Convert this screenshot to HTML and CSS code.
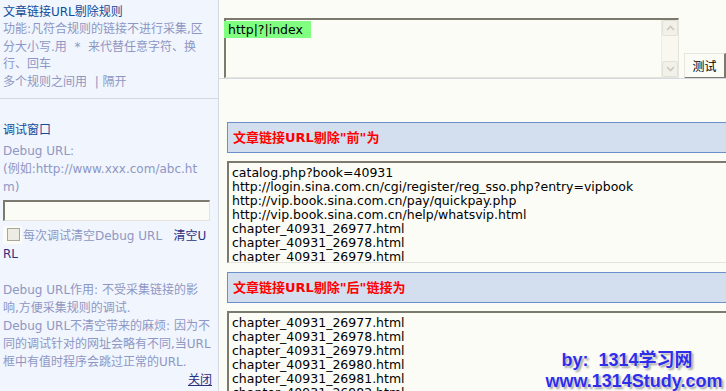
FILE: index.html
```html
<!DOCTYPE html>
<html lang="zh-CN">
<head>
    <meta charset="UTF-8">
    <title>采集规则 - 链接过滤</title>
    <link rel="stylesheet" href="styles.css">
</head>
<body>
    <div class="page">
        <div class="side top">
            <div class="label">文章链接URL剔除规则</div>
            <div class="note">功能:凡符合规则的链接不进行采集,区分大小写.用&nbsp; * &nbsp;来代替任意字符、换行、回车<br>多个规则之间用&nbsp; | 隔开</div>
        </div>
        <div class="main top rules-row">
            <div class="box rules">
                <div class="box-text"><span class="hit">http|?|index</span></div>
                <div class="scroll">
                    <span class="arrow"><svg width="9" height="6" viewBox="0 0 9 6"><path d="M1 5 L4.5 1.5 L8 5" fill="none" stroke="#c9c9bf" stroke-width="1.6"/></svg></span>
                    <span class="arrow"><svg width="9" height="6" viewBox="0 0 9 6"><path d="M1 1 L4.5 4.5 L8 1" fill="none" stroke="#c9c9bf" stroke-width="1.6"/></svg></span>
                </div>
            </div>
            <button class="btn">测试</button>
        </div>

        <div class="side debug">
            <div class="label label-gap">调试窗口</div>
            <div class="note">Debug URL:<br>(例如:http://www.xxx.com/abc.htm)</div>
            <div class="field"></div>
            <div class="note check-line"><span class="check"><span class="check-box"></span></span>每次调试清空Debug URL&nbsp;&nbsp; <a class="clear" href="#">清空URL</a></div>
            <div class="note"><br>Debug URL作用: 不受采集链接的影响,方便采集规则的调试.<br>Debug URL不清空带来的麻烦: 因为不同的调试针对的网址会略有不同,当URL框中有值时程序会跳过正常的URL.</div>
            <div class="note close"><a href="#">关闭</a></div>
        </div>
        <div class="main results">
            <div class="bar">文章链接URL剔除"前"为</div>
            <div class="box list">
                catalog.php?book=40931<br>
                http://login.sina.com.cn/cgi/register/reg_sso.php?entry=vipbook<br>
                http://vip.book.sina.com.cn/pay/quickpay.php<br>
                http://vip.book.sina.com.cn/help/whatsvip.html<br>
                chapter_40931_26977.html<br>
                chapter_40931_26978.html<br>
                chapter_40931_26979.html<br>
                chapter_40931_26980.html
            </div>
            <div class="bar">文章链接URL剔除"后"链接为</div>
            <div class="box list">
                chapter_40931_26977.html<br>
                chapter_40931_26978.html<br>
                chapter_40931_26979.html<br>
                chapter_40931_26980.html<br>
                chapter_40931_26981.html<br>
                chapter_40931_26982.html
            </div>
        </div>

        <div class="mark">
            <div class="mark-by">by:&nbsp; 1314学习网</div>
            <div>www.1314Study.com</div>
        </div>
    </div>
</body>
</html>
```
FILE: styles.css
```css
body {
    margin: 0;
    padding: 0;
    font-family: 'DejaVu Sans', 'Noto Sans CJK SC', sans-serif;
    font-size: 12px;
    background-color: #fcfcf6;
    overflow: hidden;
}
.page {
    position: relative;
    display: grid;
    grid-template-columns: 219px 1fr;
    grid-template-rows: 99px 300px;
    height: 391px;
}
.side {
    background-color: #f1f5fd;
    border-right: 1px solid #d4d9e2;
    padding: 3px 6px 0 3px;
    word-break: break-all;
}
.top {
    border-bottom: 1px solid #d4d9e2;
}
.top .note {
    line-height: 17.5px;
}
.main {
    background-color: #fcfcf6;
    min-width: 0;
    overflow: hidden;
}
.label {
    color: #0f4c9a;
    line-height: 18px;
}
.label-gap {
    margin-bottom: 3px;
}
.note {
    color: #8e97c4;
    line-height: 18px;
}

/* top row: rule textarea + button */
.rules-row {
    display: flex;
    align-items: flex-end;
    gap: 5px;
    padding: 17px 0 0 5px;
    height: 61px;
}
.box {
    box-sizing: border-box;
    background-color: #fcfcf6;
    border-top: 2px solid #7c7a6e;
    border-left: 2px solid #7c7a6e;
    border-right: 1px solid #e4e4dc;
    border-bottom: 1px solid #e4e4dc;
}
.rules {
    display: flex;
    width: 455px;
    height: 60px;
}
.box-text {
    flex: 1;
    padding: 1px 0 0 0;
}
.hit {
    display: inline-block;
    margin-left: -2px;
    padding: 1px 8px 1px 4px;
    background-color: #80ff80;
    color: #000000;
    font-size: 12.5px;
    line-height: 15px;
}
.scroll {
    width: 16px;
    display: flex;
    flex-direction: column;
    justify-content: space-between;
    background-color: #f8f8f1;
    border-left: 1px solid #ececE4;
}
.arrow {
    box-sizing: border-box;
    height: 16px;
    display: flex;
    align-items: center;
    justify-content: center;
    background-color: #f1f1ea;
    border: 1px solid #e2e2d9;
    border-radius: 2px;
}
.btn {
    width: 42px;
    height: 26px;
    margin-bottom: -1px;
    padding: 0;
    font-family: 'DejaVu Sans', 'Noto Sans CJK SC', sans-serif;
    font-size: 12px;
    color: #000000;
    background-color: #fcfcf6;
    border-top: 1px solid #e6e6de;
    border-left: 1px solid #e6e6de;
    border-right: 2px solid #7c7a6e;
    border-bottom: 2px solid #7c7a6e;
}

/* debug column */
.debug {
    padding-top: 22px;
}
.field {
    box-sizing: border-box;
    width: 207px;
    height: 21px;
    margin: 4px 0 5px 0;
    background-color: #fcfcf6;
    border-top: 2px solid #7c7a6e;
    border-left: 2px solid #7c7a6e;
    border-right: 1px solid #e4e4dc;
    border-bottom: 1px solid #e4e4dc;
}
.check {
    display: inline-block;
    vertical-align: -4px;
    width: 19px;
    height: 18px;
    margin-right: 1px;
    background-color: #fcfcf6;
}
.check-box {
    display: block;
    box-sizing: border-box;
    width: 13px;
    height: 13px;
    margin: 2px 0 0 4px;
    border: 1px solid #a7a79b;
    background-color: #ecece4;
}
.clear {
    color: #2f2f7f;
    text-decoration: none;
}
.close {
    text-align: right;
}
.close a {
    color: #2f2f7f;
}

/* result boxes */
.results {
    padding: 23px 0 0 8px;
}
.bar {
    box-sizing: border-box;
    width: 540px;
    height: 31px;
    padding-left: 5px;
    line-height: 29px;
    background-color: #d3dfee;
    border: 1px solid #6a8fcb;
    border-right: none;
    color: #ff0000;
    font-size: 13px;
    font-weight: bold;
}
.list {
    width: 540px;
    height: 102px;
    margin: 8px 0 9px 0;
    padding: 3px 3px;
    font-size: 12.5px;
    line-height: 14px;
    color: #000000;
    overflow: hidden;
}

/* watermark */
.mark {
    position: absolute;
    top: 350px;
    left: 540px;
    width: 188px;
    text-align: center;
    font-family: 'Liberation Sans', 'Noto Sans CJK SC', sans-serif;
    font-size: 18px;
    font-weight: bold;
    line-height: 21px;
    color: #2e2eea;
    text-shadow: 0 0 2px #ffffff, 2px 2px 2px #a0a0a0;
}
.mark-by {
    padding-right: 14px;
}
```
